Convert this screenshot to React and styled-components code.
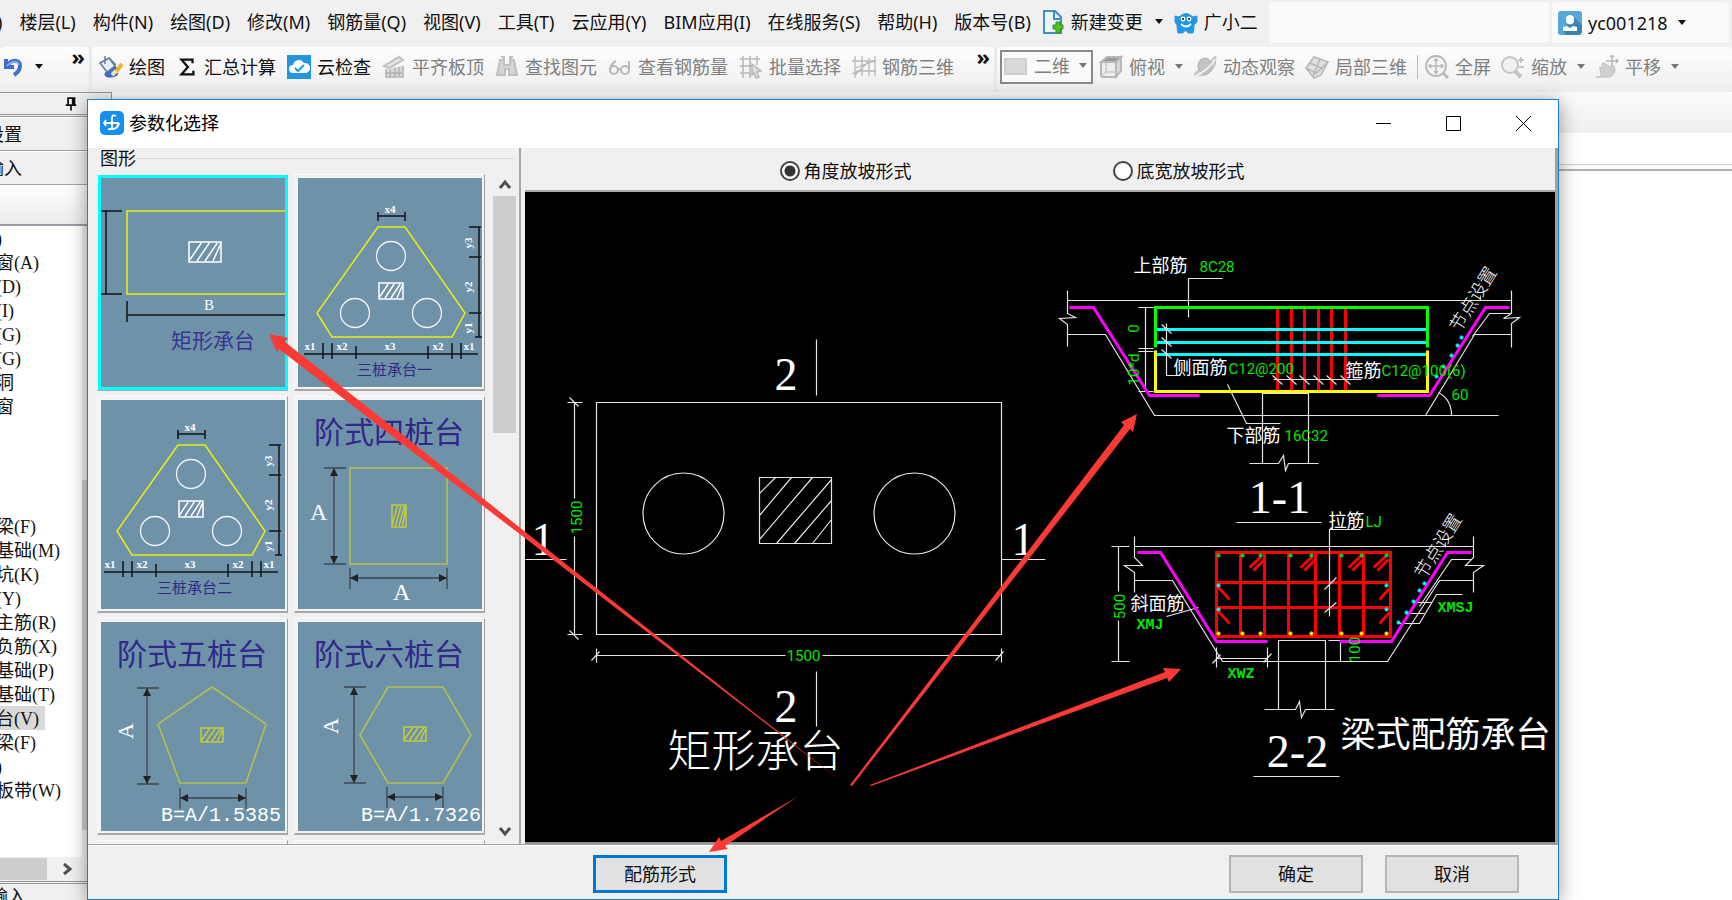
import React from "react";
import styled, { createGlobalStyle } from "styled-components";

const ui = '"Noto Sans", "Noto Sans CJK SC", sans-serif';
const mono = '"Liberation Mono", "Noto Sans CJK SC", monospace';
const serif = '"Liberation Serif", "Noto Sans CJK SC", serif';

const GlobalStyle = createGlobalStyle`
  * { box-sizing: border-box; }
  body { margin: 0; background: #fff; font-family: ${ui}; font-size: 18px; line-height: 24px; color: #111; }
  button, input, select { font: inherit; color: inherit; margin: 0; padding: 0; border: 0; background: none; }
  svg { display: block; }
`;

const Page = styled.div`
  position: relative;
  display: flex;
  flex-direction: column;
  height: 100vh;
  overflow: hidden;
  background: #fff;
`;

/* ---------- menu bar ---------- */
const MenuBar = styled.nav`
  display: flex;
  align-items: stretch;
  flex: none;
  height: 47px;
  padding-bottom: 4px;
  background: #f0f0f0;
  white-space: nowrap;
`;
const MenuItems = styled.div`
  display: flex;
  align-items: center;
  gap: 17px;
  margin-left: -3px;
`;
const MenuButton = styled.button`
  display: flex;
  align-items: center;
  gap: 6px;
  height: 24px;
`;
const MenuTools = styled.div`
  display: flex;
  align-items: center;
  gap: 11px;
  width: 228px;
  margin-left: 10px;
`;
const MenuPanel = styled.div`
  display: flex;
  align-items: center;
  flex: ${(p) => p.$grow || "none"};
  width: ${(p) => p.$width || "auto"};
  margin: 2px 3px 0 0;
  padding-left: 6px;
  border-radius: 4px;
  background: #fafafa;
`;

/* ---------- tool bar ---------- */
const ToolBar = styled.div`
  display: flex;
  flex: none;
  height: 45px;
  gap: 3px;
  background: #e9e9e9;
  white-space: nowrap;
`;
const ToolGroup = styled.div`
  position: relative;
  display: flex;
  align-items: center;
  gap: ${(p) => p.$gap || 11}px;
  width: ${(p) => p.$width || "auto"};
  flex: ${(p) => (p.$width ? "none" : "1")};
  padding: 0 0 6px ${(p) => p.$pad}px;
  border-radius: 4px;
  background: linear-gradient(#fdfdfd, #eeeeee);
`;
const ToolButton = styled.button`
  display: flex;
  align-items: center;
  gap: 6px;
  color: ${(p) => (p.$off ? "#808080" : "#111")};
`;
const More = styled.button`
  align-self: flex-start;
  margin-left: auto;
  margin-right: 4px;
  font-size: 22px;
  font-weight: 700;
  line-height: 18px;
`;
const Combo = styled.label`
  display: flex;
  align-items: center;
  gap: 6px;
  width: 93px;
  height: 34px;
  padding: 0 4px 2px 2px;
  margin: 0 -4px 0 0;
  border: 2px solid #8a8a8a;
  background: #fafafa;
  color: #808080;
`;
const ComboSelect = styled.select`
  appearance: none;
  width: 44px;
  flex: 1;
`;
const Caret = styled.span`
  flex: none;
  width: 8px;
  border: 4px solid transparent;
  border-top: 5px solid ${(p) => (p.$off ? "#777" : "#111")};
  border-bottom: 0;
  margin-left: ${(p) => p.$gap || 0}px;
`;
const Divider = styled.span`
  width: 1px;
  height: 24px;
  margin-right: -3px;
  background: #bbb;
`;

/* ---------- workspace behind the dialog ---------- */
const Workspace = styled.div`
  display: flex;
  flex: 1;
  min-height: 0;
`;
const SidePanel = styled.aside`
  display: flex;
  flex-direction: column;
  flex: none;
  width: 112px;
  overflow: hidden;
  background: #f0f0f0;
  border-top: 1px solid #999;
  border-right: 1px solid #999;
`;
const SideHeader = styled.div`
  display: flex;
  align-items: center;
  height: 24px;
  padding-left: 64px;
  border-bottom: 3px double #999;
`;
const SideTab = styled.button`
  flex: none;
  width: 100%;
  height: 34px;
  text-align: left;
  text-indent: -14px;
  border-bottom: 1px solid #a5a5a5;
  box-shadow: inset 0 1px #fff;
`;
const SideStrip = styled.div`
  flex: none;
  height: 41px;
  background: linear-gradient(#fdfdfd, #ececec);
  border-bottom: 2px solid #9a9aa2;
`;
const TreeWrap = styled.div`
  display: flex;
  flex: 1;
  min-height: 0;
  background: #fff;
`;
const Tree = styled.ul`
  flex: none;
  width: 82px;
  margin: 0;
  padding: 0;
  list-style: none;
  overflow: hidden;
`;
const TreeRow = styled.li`
  height: 24px;
  text-indent: ${(p) => (p.$cut ? -15 : -2)}px;
  white-space: nowrap;
`;
const TreeLabel = styled.span`
  display: inline-block;
  height: 24px;
  padding-right: 6px;
  background: ${(p) => (p.$on ? "#d9d9d9" : "transparent")};
`;
const Latin = styled.span`
  font-family: ${serif};
`;
const Track = styled.div`
  display: flex;
  flex-direction: ${(p) => (p.$vertical ? "column" : "row")};
  align-items: center;
  flex: none;
  ${(p) => (p.$vertical ? "width: 23px;" : "height: 24px;")}
  background: #f0f0f0;
`;
const TreeThumb = styled.div`
  width: 23px;
  height: 350px;
  margin-top: 254px;
  background: #cdcdcd;
`;
const SideThumb = styled.div`
  width: 47px;
  height: 22px;
  margin-right: 14px;
  background: #cdcdcd;
`;
const SideFooter = styled.div`
  flex: none;
  height: 19px;
  overflow: hidden;
  border-top: 3px double #999;
  text-indent: -10px;
`;
const Backdrop = styled.div`
  flex: 1;
`;
const Band = styled.div`
  height: 41px;
  background: linear-gradient(#fbfbfb, #efefef);
`;
const Ruler = styled.div`
  height: 38px;
  border-bottom: 2px solid #b0b0b4;
  background: linear-gradient(#fff 31px, #d0d0d0 31px, #d0d0d0 32px, #fafafa 32px);
`;

/* ---------- dialog ---------- */
const Dialog = styled.section`
  position: absolute;
  top: 99px;
  right: 173px;
  bottom: 0;
  left: 87px;
  display: flex;
  flex-direction: column;
  border: 1px solid #1a80cc;
  background: #f0f0f0;
  box-shadow: 0 3px 18px rgba(0, 0, 0, 0.4);
`;
const TitleBar = styled.header`
  display: flex;
  align-items: center;
  gap: 5px;
  flex: none;
  height: 48px;
  padding: 0 27px 2px 12px;
  background: #fff;
  color: #000;
`;
const Title = styled.h1`
  flex: 1;
  margin: 0;
  font-size: 18px;
  font-weight: 400;
`;
const WindowButtons = styled.div`
  display: flex;
  gap: 55px;
`;
const Body = styled.div`
  display: flex;
  flex: 1;
  min-height: 0;
`;
const Gallery = styled.fieldset`
  display: flex;
  flex: none;
  width: 433px;
  min-width: 0;
  margin: 0;
  padding: 0 4px 0 9px;
  border: 0;
  border-right: 2px solid #a6a6a6;
  flex-direction: column;
`;
const GalleryTitle = styled.legend`
  float: left;
  display: flex;
  align-items: center;
  width: 100%;
  height: 20px;
  padding: 0 0 0 3px;
  &::after {
    content: "";
    flex: 1;
    height: 1px;
    background: #dcdcdc;
  }
`;
const GalleryRow = styled.div`
  display: flex;
  flex: 1;
  min-height: 0;
  gap: 8px;
  padding-top: 6px;
`;
const Cards = styled.div`
  display: grid;
  grid-template-columns: 191px 191px;
  grid-auto-rows: 217px;
  gap: 5px 6px;
  flex: none;
  height: 100%;
  overflow: hidden;
`;
const Card = styled.button`
  padding: 1px 0 0 1px;
  border: 1px solid #fcfcfc;
  border-right: 1px solid #a0a0a0;
  border-bottom: 2px solid #a8a8a8;
  & > svg {
    width: 100%;
    height: 100%;
    background: #6e93a9;
    border: 2px solid ${(p) => (p.$on ? "#00ffff" : "#f4f4f4")};
    outline: ${(p) => (p.$on ? "1px solid #00ffff" : "none")};
  }
`;
const ScrollColumn = styled(Track)`
  justify-content: space-between;
  padding: 4px 0 6px;
`;
const ScrollThumb = styled.div`
  width: 100%;
  height: 237px;
  margin: 4px 0 auto;
  background: #cdcdcd;
`;
const Preview = styled.div`
  display: flex;
  flex: 1;
  flex-direction: column;
  min-width: 0;
  padding-left: 4px;
  border-right: 3px solid #a0a0a0;
`;
const Options = styled.div`
  display: flex;
  justify-content: center;
  align-items: center;
  gap: 201px;
  flex: none;
  height: 44px;
  padding: 4px 56px 0 0;
  border-bottom: 2px solid #a8a8a8;
`;
const Option = styled.label`
  display: flex;
  align-items: center;
  gap: 4px;
`;
const Radio = styled.input`
  appearance: none;
  width: 20px;
  height: 20px;
  border: 2px solid #444;
  border-radius: 50%;
  background: #fff;
  &:checked {
    background: radial-gradient(#333 0 5px, #fff 6px);
  }
`;
const Canvas = styled.div`
  flex: 1;
  min-height: 0;
  border-bottom: 2px solid #909090;
  background: #000;
  & > svg {
    width: 100%;
    height: 100%;
  }
`;
const Footer = styled.footer`
  display: flex;
  align-items: center;
  gap: 22px;
  flex: none;
  height: 55px;
  padding: 4px 39px 0 505px;
  border-top: 1px solid #a4a4a4;
  box-shadow: inset 0 1px #fff;
`;
const PushButton = styled.button`
  width: 134px;
  height: 38px;
  background: #e1e1e1;
  border: ${(p) => (p.$primary ? "3px solid #0078d7" : "2px solid #b4b4b4")};
  margin-right: ${(p) => (p.$primary ? "auto" : "0")};
`;
const Arrows = styled.svg`
  position: absolute;
  inset: -1px;
  width: calc(100% + 2px);
  height: calc(100% + 2px);
  pointer-events: none;
`;

/* ---------- icons ---------- */
const Icon = ({ children, size = 24 }) => (
  <svg width={size} height={size} viewBox="0 0 24 24" fill="none" stroke="#b8b8b8" strokeWidth="2" aria-hidden="true">
    {children}
  </svg>
);
const icons = {
  undo: (
    <Icon><path d="M4 4v8h8M5 11C9 4 18 4 18 11c0 4-3 7-6 9" stroke="#3d70cc" strokeWidth="4" /><path d="M5 11c4-5 11-6 12-1" stroke="#8db2ef" strokeWidth="1.5" /></Icon>
  ),
  paint: (
    <Icon>
      <path d="M10 12c6-4 9 1 6 5 3 0 4 3 0 4-5 2-10 1-10-2z" fill="#3c6fc9" stroke="#24509f" strokeWidth="1" />
      <path d="M1 8l9-5 6 8-8 6z" fill="#e8eef6" stroke="#647a96" strokeWidth="1.5" />
      <path d="M6 1v8M10 3l7 7" stroke="#647a96" strokeWidth="1.5" />
      <path d="M23 9l-6 8" stroke="#e8b52c" strokeWidth="4" />
      <path d="M17 16l-4 4" stroke="#f3e3a8" strokeWidth="4" />
    </Icon>
  ),
  sum: <Icon size={22}><path d="M18 8V4H6l7 8-7 8h13v-4" stroke="#111" strokeWidth="2.5" /></Icon>,
  cloud: (
    <Icon>
      <rect x="0" y="0" width="24" height="24" fill="#2696dc" stroke="none" />
      <path d="M6 18a4 4 0 010-8 6 6 0 0111-2 5 5 0 012 10z" fill="#fff" stroke="none" />
      <path d="M8 13l3 3 6-6" stroke="#2696dc" />
    </Icon>
  ),
  slab: <Icon><path d="M2 11L17 2l4 3L7 13z" fill="#e4e4e4" stroke="#c0c0c0" /><path d="M4 14v8h17V11" fill="#d8d8d8" stroke="#c0c0c0" /><path d="M8 15v7m5-9v9m4-10v9M4 18h17" stroke="#b0b0b0" strokeWidth="1.3" /></Icon>,
  binoc: <Icon><path d="M5 5h4v5h6V5h4l3 15h-8v-6h-4v6H2zM6 2h3v3m6 0V2h3" fill="#d4d4d4" stroke="#c0c0c0" /></Icon>,
  glasses: <Icon><circle cx="6" cy="15" r="4" /><circle cx="17" cy="15" r="4" /><path d="M2 15Q3 8 8 6M10 14h3M21 14V6" /></Icon>,
  batch: <Icon><path d="M1 4h20M1 11h12M1 18h11M4 1v22M11 1v22M18 1v9" strokeWidth="1.5" /><path d="M13 9l9 7-4 1 2 5-3 1-2-5-2 2z" fill="#ddd" strokeWidth="1.5" /></Icon>,
  bars: <Icon><path d="M3 1v22M10 1v20M17 3v18M23 1v20M0 6h24M0 19l6-3h18M3 13l20-7M3 20L17 6" strokeWidth="1.3" /></Icon>,
  plane: <Icon><rect x="1" y="5" width="21" height="15" fill="#d9d9d9" stroke="#cfcfcf" /></Icon>,
  cube: <Icon><path d="M2 7l6-5h14l-5 5z" fill="#999" /><path d="M17 7l5-5v14l-5 6z" fill="#d8d8d8" /><rect x="2" y="7" width="15" height="15" fill="#eee" rx="2" /><path d="M7 8v9l-5 4m5-4h10" strokeWidth="1" /></Icon>,
  orbit: <Icon><path d="M2 21C0 15 8 17 14 11s6-10 9-9c-1 5 1 9-7 16-6 4-9 2-14 3z" fill="#cfcfcf" strokeWidth="1" /><ellipse cx="12" cy="11" rx="7" ry="8" fill="#c2c2c2" stroke="#b0b0b0" strokeWidth="1" /><path d="M1 22C8 19 18 12 22 4" stroke="#eee" /></Icon>,
  boxes: <Icon><path d="M1 13L9 2l14 5-7 13-7 3z" fill="#e0e0e0" strokeWidth="1.5" /><path d="M5 8l13 6M15 4L8 21M1 13l10 5 12-11" strokeWidth="1.5" /></Icon>,
  full: <Icon><circle cx="11" cy="11" r="10" strokeWidth="1.8" /><path d="M11 4v14M4 11h14M9 6l2-2 2 2M9 16l2 2 2-2M6 9l-2 2 2 2M16 9l2 2-2 2" strokeWidth="1.6" /><path d="M18 18l5 5" strokeWidth="3" /></Icon>,
  zoom: <Icon><circle cx="9" cy="10" r="8" fill="#f2f2f2" stroke="#c4c4c4" /><path d="M14 16l6 6" stroke="#c4c4c4" strokeWidth="4" /><path d="M17 5h6M20 2v6M18 12h5" strokeWidth="1.5" /></Icon>,
  pan: <Icon><path d="M1 22h14c5-3 6-7 4-11l-4 1-6-4c-3 0-2 3 0 5l-4-1c-1 4 3 6 0 10z" fill="#cfcfcf" stroke="#c0c0c0" strokeWidth="1" /><path d="M17 0v12M11 6h12M15 2l2-2 2 2M21 4l2 2-2 2" strokeWidth="1.5" /></Icon>,
  newDoc: (
    <Icon>
      <path d="M3 1h11l6 6v16H3z" fill="#e9f5fd" stroke="#3f8fc6" />
      <path d="M13 2v7h6" stroke="#3f8fc6" />
      <path d="M17 12h2v3h3v4h-3v4h-4v-4h-3v-4h3v-3z" fill="#4fbf22" stroke="#2f9410" strokeWidth="1" />
    </Icon>
  ),
  mascot: (
    <Icon>
      <path d="M1 6l4 1Q12 0 19 7l4-1v6l-3 3q0 4-1 8h-5l-1-2h-3l-1 2H4q-1-4-1-8l-2-3z" fill="#1b98ea" stroke="#3a94cf" strokeWidth="1" />
      <circle cx="9" cy="9" r="2.4" fill="#fff" stroke="none" /><circle cx="15" cy="9" r="2.4" fill="#fff" stroke="none" />
      <circle cx="9" cy="9" r="1.1" fill="#222" stroke="none" /><circle cx="15" cy="9" r="1.1" fill="#222" stroke="none" />
      <path d="M7 14q5 5 10 0" stroke="#fff" />
    </Icon>
  ),
  user: (
    <Icon>
      <rect width="24" height="24" rx="3" fill="#55a8d9" stroke="none" />
      <path d="M15 5l9 9v7l-3 3H8l-3-4z" fill="#3d83ad" stroke="none" />
      <path d="M8 6q4-4 8 0v5q-4 5-8 0zM5 20v-4l4-1 3 2 3-2 4 1v4z" fill="#fff" stroke="none" />
    </Icon>
  ),
  app: (
    <Icon>
      <rect width="24" height="24" rx="5" fill="#1590f0" stroke="none" />
      <path d="M16 5q-4-2-4 2v9q0 3-4 2M4 12h15M6 9l-2 3 2 3M12 18q6 0 7-6l-2 3" stroke="#fff" strokeWidth="1.8" />
    </Icon>
  ),
  pin: <Icon size={14}><path d="M7 2h11v12H7zM15 2v12M3 14h18M12 14v9" stroke="#111" strokeWidth="3" /></Icon>,
};
const Chevron = ({ d }) => (
  <svg width="14" height="14" viewBox="0 0 14 14" fill="none" stroke="#505050" strokeWidth="3" aria-hidden="true">
    <path d={d} />
  </svg>
);
const WinIcon = ({ d }) => (
  <svg width="15" height="15" viewBox="0 0 15 15" fill="none" stroke="#000" strokeWidth="1" aria-hidden="true">
    <path d={d} />
  </svg>
);

/* ---------- thumbnails ---------- */
const thumbInk = "#101418";
const olive = "#b4bf4e";
const Label = styled.text`
  font-family: ${serif};
  font-size: ${(p) => p.$size}px;
  font-weight: ${(p) => p.$weight || 400};
  fill: ${(p) => p.$fill || "#fff"};
  text-anchor: ${(p) => p.$anchor || "start"};
`;
const MonoLabel = styled(Label)`
  font-family: ${mono};
`;

const Hatch = ({ x, y, w, h, color = "#fff" }) => {
  const n = 4;
  let d = `M${x} ${y}h${w}v${h}h${-w}z`;
  for (let i = 0; i < n; i += 1) {
    const s = (w / n) * i;
    d += `M${x + s} ${y + h - 1}L${Math.min(x + s + w / 2.6, x + w)} ${y + 1}`;
  }
  return <path d={d} stroke={color} fill="none" strokeWidth="1.5" />;
};
const dim = (x1, y1, x2, y2) => {
  const v = x1 === x2;
  const heads = v
    ? `M${x1} ${y1}l-4 8h8zM${x2} ${y2}l-4 -8h8z`
    : `M${x1} ${y1}l8 -4v8zM${x2} ${y2}l-8 -4v8z`;
  const ends = v
    ? `M${x1 - 10} ${y1}h22M${x1 - 10} ${y2}h22`
    : `M${x1} ${y1 - 10}v21M${x2} ${y1 - 10}v21`;
  return (
    <g stroke="#3b4650" strokeWidth="1.3">
      <path d={`M${x1} ${y1}L${x2} ${y2}${ends}`} fill="none" />
      <path d={heads} fill="#222" stroke="none" />
    </g>
  );
};

const RectThumb = () => (
  <>
    <path d="M5 33v83M0 33h21M0 116h21M26 123v21M26 137h160" stroke={thumbInk} strokeWidth="1.5" />
    <path d="M186 33H26v83h160" stroke="#f0f010" strokeWidth="1.5" fill="none" />
    <Hatch x={88} y={64} w={32} h={20} />
    <Label x="103" y="132" $size={15}>B</Label>
    <Label x="70" y="170" $size={21} $fill="#3a3391">矩形承台</Label>
  </>
);
const TriThumb = ({ name, dx, dy }) => (
  <g transform={`translate(${dx} ${dy})`}>
    <path
      d="M80 38h27M80 34v9M107 34v9M181 49v110M171 49h12M171 79h12M171 135h12M177 159h7M6 176h174M25 165v16M34 165v16M58 168v13M130 168v13M154 165v16M163 165v16"
      stroke={thumbInk}
      strokeWidth="1.5"
    />
    <path d="M80 49h27l60 86-13 24H34L19 135z" stroke="#ecec10" strokeWidth="1.5" fill="none" />
    <g stroke="#f2f6f8" strokeWidth="1.3" fill="none">
      <circle cx="93" cy="78" r="14.5" />
      <circle cx="57" cy="135" r="14.5" />
      <circle cx="129" cy="135" r="14.5" />
    </g>
    <Hatch x={81} y={105} w={24} h={16} />
    {[["x4", 92, 35], ["x1", 12, 172], ["x2", 44, 172], ["x3", 92, 172], ["x2", 140, 172], ["x1", 171, 172]].map(([t, x, y]) => (
      <Label key={x + t} x={x} y={y} $size={11} $weight={700} $anchor="middle">{t}</Label>
    ))}
    {[["y3", 65], ["y2", 109], ["y1", 150]].map(([t, y]) => (
      <Label key={t} transform={`translate(174 ${y}) rotate(-90)`} $size={11} $weight={700} $anchor="middle">{t}</Label>
    ))}
    <Label x="59" y="197" $size={15} $fill="#2f2a86">{name}</Label>
  </g>
);
const FourThumb = () => (
  <>
    <Label x="16" y="43" $size={30} $fill="#32288a">阶式四桩台</Label>
    <path d="M52 68h97v96H52z" stroke={olive} strokeWidth="1.6" fill="none" />
    {dim(36, 68, 36, 164)}
    {dim(52, 178, 149, 178)}
    <Hatch x={94} y={105} w={14} h={22} color="#c4cc3e" />
    <Label x="12" y="120" $size={24}>A</Label>
    <Label x="95" y="200" $size={24}>A</Label>
  </>
);
const PolyThumb = ({ name, points, dims, hatch, a, note, noteX }) => (
  <>
    <Label x="16" y="43" $size={30} $fill="#32288a">{name}</Label>
    <polygon points={points} stroke={olive} strokeWidth="1.6" fill="none" />
    {dims}
    <Hatch x={hatch[0]} y={hatch[1]} w={22} h={14} color="#c4cc3e" />
    <Label transform={`translate(${a[0]} ${a[1]}) rotate(-90)`} $size={22} $anchor="middle">A</Label>
    <MonoLabel x={noteX} y="199" $size={20}>{note}</MonoLabel>
  </>
);

const cards = [
  { id: "矩形承台", on: true, art: <RectThumb /> },
  { id: "三桩承台一", art: <TriThumb name="三桩承台一" dx={0} dy={0} /> },
  { id: "三桩承台二", art: <TriThumb name="三桩承台二" dx={-3} dy={-4} /> },
  { id: "阶式四桩台", art: <FourThumb /> },
  {
    id: "阶式五桩台",
    art: (
      <PolyThumb
        name="阶式五桩台"
        points="111,65 165,102 145,161 79,161 57,102"
        dims={<>{dim(46, 66, 46, 162)}{dim(79, 176, 145, 176)}</>}
        hatch={[100, 106]}
        a={[32, 109]}
        note="B=A/1.5385"
        noteX={60}
      />
    ),
  },
  {
    id: "阶式六桩台",
    art: (
      <PolyThumb
        name="阶式六桩台"
        points="90,65 145,65 173,113 145,161 90,161 62,113"
        dims={<>{dim(56, 65, 56, 161)}{dim(89, 175, 145, 175)}</>}
        hatch={[106, 105]}
        a={[40, 104]}
        note="B=A/1.7326"
        noteX={63}
      />
    ),
  },
  { id: "七桩台" },
  { id: "八桩台" },
];

/* ---------- drawing ---------- */
const Cad = styled.text`
  font-family: ${(p) => (p.$serif ? serif : p.$mono ? mono : '"Roboto", "Noto Sans CJK SC", sans-serif')};
  font-size: ${(p) => p.$size || 15}px;
  font-weight: ${(p) => p.$weight || 400};
  fill: ${(p) => (p.$green ? "#00e800" : "#fff")};
  stroke: none;
  text-anchor: ${(p) => (p.$mid ? "middle" : "start")};
`;
const Turned = ({ x, y, angle, children, ...rest }) => (
  <Cad transform={`translate(${x} ${y}) rotate(${angle})`} $mid {...rest}>{children}</Cad>
);
const Dots = ({ list, color }) => (
  <path d={list.map(([x, y]) => `M${x - 2} ${y}h4M${x} ${y - 2}v4`).join("")} stroke={color} strokeWidth="2" />
);
const barX = [1277, 1291, 1304, 1318, 1331, 1345];
const dotX = [1218, 1242, 1260, 1290, 1311, 1341, 1361, 1386];
const hookX = [1264, 1315, 1363, 1388];

const PlanView = () => (
  <g>
    <path d="M596 402H1001V634H596zM816 339V395M816 671V726M525 559H566M1001 559H1045M574 402V498M574 536V634M567 402h15M567 634h15M596 655H785M822 655H1001M596 648v14M1001 648v14M569 397l9 9M569 630l9 9M591 660l8 -9M995 660l8 -9" />
    <circle cx="683" cy="513" r="40.5" />
    <circle cx="914" cy="513" r="40.5" />
    <path d="M759 477h72v66h-72zM759 493L775 477M759 515L791 477M759 539L812 477M776 543L831 479M794 543L831 500M812 543L831 519" />
    <Cad x="774" y="389" $size={46} $serif>2</Cad>
    <Cad x="774" y="721" $size={46} $serif>2</Cad>
    <Cad x="531" y="554" $size={46} $serif>1</Cad>
    <Cad x="1011" y="554" $size={46} $serif>1</Cad>
    <Cad x="667" y="766" $size={44} $weight={300}>矩形承台</Cad>
    <Cad x="803" y="660" $green $mid>1500</Cad>
    <Turned x="581" y="517" angle={-90} $green>1500</Turned>
  </g>
);

const SectionOne = () => (
  <g>
    <path d="M1067 300H1511M1067 290V313L1075 317L1059 318L1067 324V346M1067 334H1105L1154 415H1498M1425 415L1474 334H1511M1472 336L1489 313H1510M1511 290V313L1503 318L1519 317L1511 323V347M1438 392Q1451 399 1451 415" />
    <path d="M1188 317V278H1222M1145 307V391M1138 307h15M1138 348h15M1138 351h15M1138 391h15M1227 384L1246 423H1280" />
    <path d="M1262 463V393H1308V463M1249 463H1278L1283 455L1285 470L1288 463H1318M1236 522H1321" />
    <path d="M1069 307H1093L1149 395H1199M1377 395H1429L1485 307H1509" stroke="#ff00ff" strokeWidth="3" />
    <path d={barX.map((x) => `M${x} 307V391`).join("")} stroke="#f00" strokeWidth="3" />
    <path d="M1155 329H1427M1155 342H1427M1155 354H1427" stroke="#0ff" strokeWidth="3" />
    <path d="M1155 347V307H1427V347" stroke="#0f0" strokeWidth="3" />
    <path d="M1155 350V391H1427V350" stroke="#ff0" strokeWidth="3" />
    <path d={`M1166 323V375H1180M1161 324l10 9M1161 337l10 9M1161 349l10 9M1273 379H1361${barX.map((x) => `M${x - 5} 375l10 9`).join("")}`} />
    <Dots list={[[1461, 337], [1457, 345], [1451, 355], [1443, 366], [1436, 376]]} color="#0ff" />
    <Cad x="1133" y="271" $size={18}>上部筋</Cad>
    <Cad x="1199" y="271" $green>8C28</Cad>
    <Cad x="1173" y="373" $size={18}>侧面筋</Cad>
    <Cad x="1228" y="373" $green>C12@200</Cad>
    <Cad x="1345" y="376" $size={18}>箍筋</Cad>
    <Cad x="1381" y="375" $green>C12@100(6)</Cad>
    <Cad x="1451" y="399" $green>60</Cad>
    <Cad x="1226" y="441" $size={18}>下部筋</Cad>
    <Cad x="1284" y="440" $green>16C32</Cad>
    <Turned x="1138" y="328" angle={-90} $green>0</Turned>
    <Turned x="1138" y="369" angle={-90} $green>10*d</Turned>
    <Turned x="1478" y="302" angle={-58} $size={18} $weight={300}>节点设置</Turned>
    <Cad x="1279" y="512" $size={46} $serif $mid>1-1</Cad>
  </g>
);

const SectionTwo = () => (
  <g>
    <path d="M1134 546H1473M1134 536V557L1142 565L1124 565L1134 572V592M1134 580H1172L1222 661H1387L1439 580H1473M1419 606L1451 559H1471M1473 536V557L1465 565L1483 565L1473 572V592" />
    <path d="M1118 546V591M1118 620V661M1111 546h18M1111 661h18M1166 616L1198 607M1216 658H1267M1216 647v20M1267 647v20M1212 663l8 -9M1263 662l8 -9M1328 640h12v21M1436 594H1462M1436 594L1419 623H1398M1405 613H1424M1414 602H1432" />
    <path d="M1278 709V640H1325V709M1264 709H1295L1299 701L1301 717L1305 709H1334M1253 776H1339" />
    <path d="M1137 552H1160L1216 641H1267M1339 641H1391L1447 552H1471" stroke="#ff00ff" strokeWidth="3" />
    <path
      d={`M1216 552H1390V636H1216zM1240 552V636M1264 552V636M1288 552V636M1315 552V636M1339 552V636M1363 552V636M1216 582H1390M1216 607H1390M1218 587l11 12M1218 611l11 12M1389 588l-10 11M1389 612l-10 11${hookX
        .map((x) => `M${x - 3} 556l-12 11M${x} 559l-11 11`)
        .join("")}`}
      stroke="#f00"
      strokeWidth="3"
    />
    <Dots list={dotX.map((x) => [x, 555])} color="#00e020" />
    <Dots list={dotX.map((x) => [x, 633])} color="#ff0" />
    <Dots list={[[1218, 585], [1386, 585], [1218, 609], [1386, 609], [1424, 583], [1419, 590], [1413, 601], [1406, 612], [1398, 622]]} color="#0ff" />
    <path d="M1360 529H1329V616M1324 589l12 -12M1324 612l12 -10" />
    <Cad x="1328" y="526" $size={18}>拉筋</Cad>
    <Cad x="1365" y="526" $green>LJ</Cad>
    <Cad x="1130" y="609" $size={18}>斜面筋</Cad>
    <Cad x="1136" y="628" $green $mono $weight={700}>XMJ</Cad>
    <Cad x="1227" y="677" $green $mono $weight={700}>XWZ</Cad>
    <Cad x="1437" y="611" $green $mono $weight={700}>XMSJ</Cad>
    <Turned x="1124" y="606" angle={-90} $green>500</Turned>
    <Turned x="1359" y="649" angle={-90} $green>100</Turned>
    <Turned x="1443" y="549" angle={-58} $size={18} $weight={300}>节点设置</Turned>
    <Cad x="1297" y="766" $size={46} $serif $mid>2-2</Cad>
    <Cad x="1340" y="746" $size={35}>梁式配筋承台</Cad>
  </g>
);

/* ---------- data ---------- */
const menus = [")", "楼层(L)", "构件(N)", "绘图(D)", "修改(M)", "钢筋量(Q)", "视图(V)", "工具(T)", "云应用(Y)", "BIM应用(I)", "在线服务(S)", "帮助(H)", "版本号(B)"];
const mainTools = [
  ["paint", "绘图"], ["sum", "汇总计算"], ["cloud", "云检查"],
  ["slab", "平齐板顶", true], ["binoc", "查找图元", true], ["glasses", "查看钢筋量", true], ["batch", "批量选择", true], ["bars", "钢筋三维", true],
];
const tree = [
  ["", ")"], ["窗", "(A)"], ["", "(D)"], ["", "(I)"], ["", "(G)"], ["", "(G)"], ["洞", ""], ["窗", ""], ["", ""], ["", ""], ["盖", "", "cut"], ["", ""],
  ["梁", "(F)"], ["基础", "(M)"], ["坑", "(K)"], ["", "(Y)"], ["主筋", "(R)"], ["负筋", "(X)"], ["基础", "(P)"], ["基础", "(T)"], ["台", "(V)", "on"],
  ["梁", "(F)"], ["", ")"], ["板带", "(W)"],
];

export default function App() {
  return (
    <Page>
      <GlobalStyle />
      <MenuBar>
        <MenuItems>
          {menus.map((m) => <MenuButton key={m}>{m}</MenuButton>)}
        </MenuItems>
        <MenuTools>
          <MenuButton>{icons.newDoc}新建变更<Caret $gap={6} /></MenuButton>
          <MenuButton>{icons.mascot}广小二</MenuButton>
        </MenuTools>
        <MenuPanel $grow="1" />
        <MenuPanel $width="177px">
          <MenuButton>{icons.user}yc001218<Caret $gap={4} /></MenuButton>
        </MenuPanel>
      </MenuBar>

      <ToolBar>
        <ToolGroup $width="89px" $pad={2}>
          <ToolButton aria-label="撤销">{icons.undo}<Caret $gap={3} /></ToolButton>
          <More aria-label="更多">»</More>
        </ToolGroup>
        <ToolGroup $width="902px" $pad={7}>
          {mainTools.map(([icon, name, off]) => (
            <ToolButton key={name} $off={off}>{icons[icon]}{name}</ToolButton>
          ))}
          <More aria-label="更多">»</More>
        </ToolGroup>
        <ToolGroup $pad={3} $gap={10}>
          <Combo>
            {icons.plane}
            <ComboSelect aria-label="视图模式" defaultValue="2d"><option value="2d">二维</option></ComboSelect>
            <Caret $off />
          </Combo>
          <ToolButton $off>{icons.cube}俯视<Caret $off $gap={4} /></ToolButton>
          <ToolButton $off>{icons.orbit}动态观察</ToolButton>
          <ToolButton $off>{icons.boxes}局部三维</ToolButton>
          <Divider />
          <ToolButton $off>{icons.full}全屏</ToolButton>
          <ToolButton $off>{icons.zoom}缩放<Caret $off $gap={4} /></ToolButton>
          <ToolButton $off>{icons.pan}平移<Caret $off $gap={4} /></ToolButton>
        </ToolGroup>
      </ToolBar>

      <Workspace>
        <SidePanel>
          <SideHeader>{icons.pin}</SideHeader>
          <SideTab>设置</SideTab>
          <SideTab>输入</SideTab>
          <SideStrip />
          <TreeWrap>
            <Tree>
              {tree.map(([name, key, state], i) => (
                <TreeRow key={i} $cut={state === "cut"}>
                  <TreeLabel $on={state === "on"}>{name}<Latin>{key}</Latin></TreeLabel>
                </TreeRow>
              ))}
            </Tree>
            <Track $vertical><TreeThumb /></Track>
          </TreeWrap>
          <Track><SideThumb /><Chevron d="M3 2l6 5-6 5" /></Track>
          <SideFooter>输入</SideFooter>
        </SidePanel>
        <Backdrop>
          <Band />
          <Ruler />
        </Backdrop>
      </Workspace>

      <Dialog role="dialog" aria-label="参数化选择">
        <TitleBar>
          {icons.app}
          <Title>参数化选择</Title>
          <WindowButtons>
            <button aria-label="最小化"><WinIcon d="M0 7.5h15" /></button>
            <button aria-label="最大化"><WinIcon d="M.5 .5h14v14h-14z" /></button>
            <button aria-label="关闭"><WinIcon d="M0 0l15 15M15 0L0 15" /></button>
          </WindowButtons>
        </TitleBar>
        <Body>
          <Gallery>
            <GalleryTitle>图形</GalleryTitle>
            <GalleryRow>
              <Cards>
                {cards.map((c) => (
                  <Card key={c.id} $on={c.on} aria-label={c.id}>
                    <svg viewBox="0 0 184 208" preserveAspectRatio="xMinYMin meet">{c.art}</svg>
                  </Card>
                ))}
              </Cards>
              <ScrollColumn $vertical>
                <Chevron d="M2 10l5-6 5 6" />
                <ScrollThumb />
                <Chevron d="M2 4l5 6 5-6" />
              </ScrollColumn>
            </GalleryRow>
          </Gallery>
          <Preview>
            <Options>
              <Option><Radio type="radio" name="slope" defaultChecked />角度放坡形式</Option>
              <Option><Radio type="radio" name="slope" />底宽放坡形式</Option>
            </Options>
            <Canvas>
              <svg viewBox="525 192 1030 650">
                <g transform="translate(.5 .5)" stroke="#e4e4e4" strokeWidth="1.2" fill="none">
                  <PlanView />
                  <SectionOne />
                  <SectionTwo />
                </g>
              </svg>
            </Canvas>
          </Preview>
        </Body>
        <Footer>
          <PushButton $primary>配筋形式</PushButton>
          <PushButton>确定</PushButton>
          <PushButton>取消</PushButton>
        </Footer>
        <Arrows viewBox="87 99 1472 801" fill="#fb3a36" aria-hidden="true">
          <path d="M269 334L288 338L285 342L842 782L279 349L277 352z" />
          <path d="M1137 414L1133 432L1130 429L852 786L850 785L1124 425L1121 422z" />
          <path d="M1181 669L1169 682L1167 678L871 786L870 785L1165 672L1163 668z" />
          <path d="M709 852L719 837L721 841L797 797L725 846L728 849z" />
        </Arrows>
      </Dialog>
    </Page>
  );
}
